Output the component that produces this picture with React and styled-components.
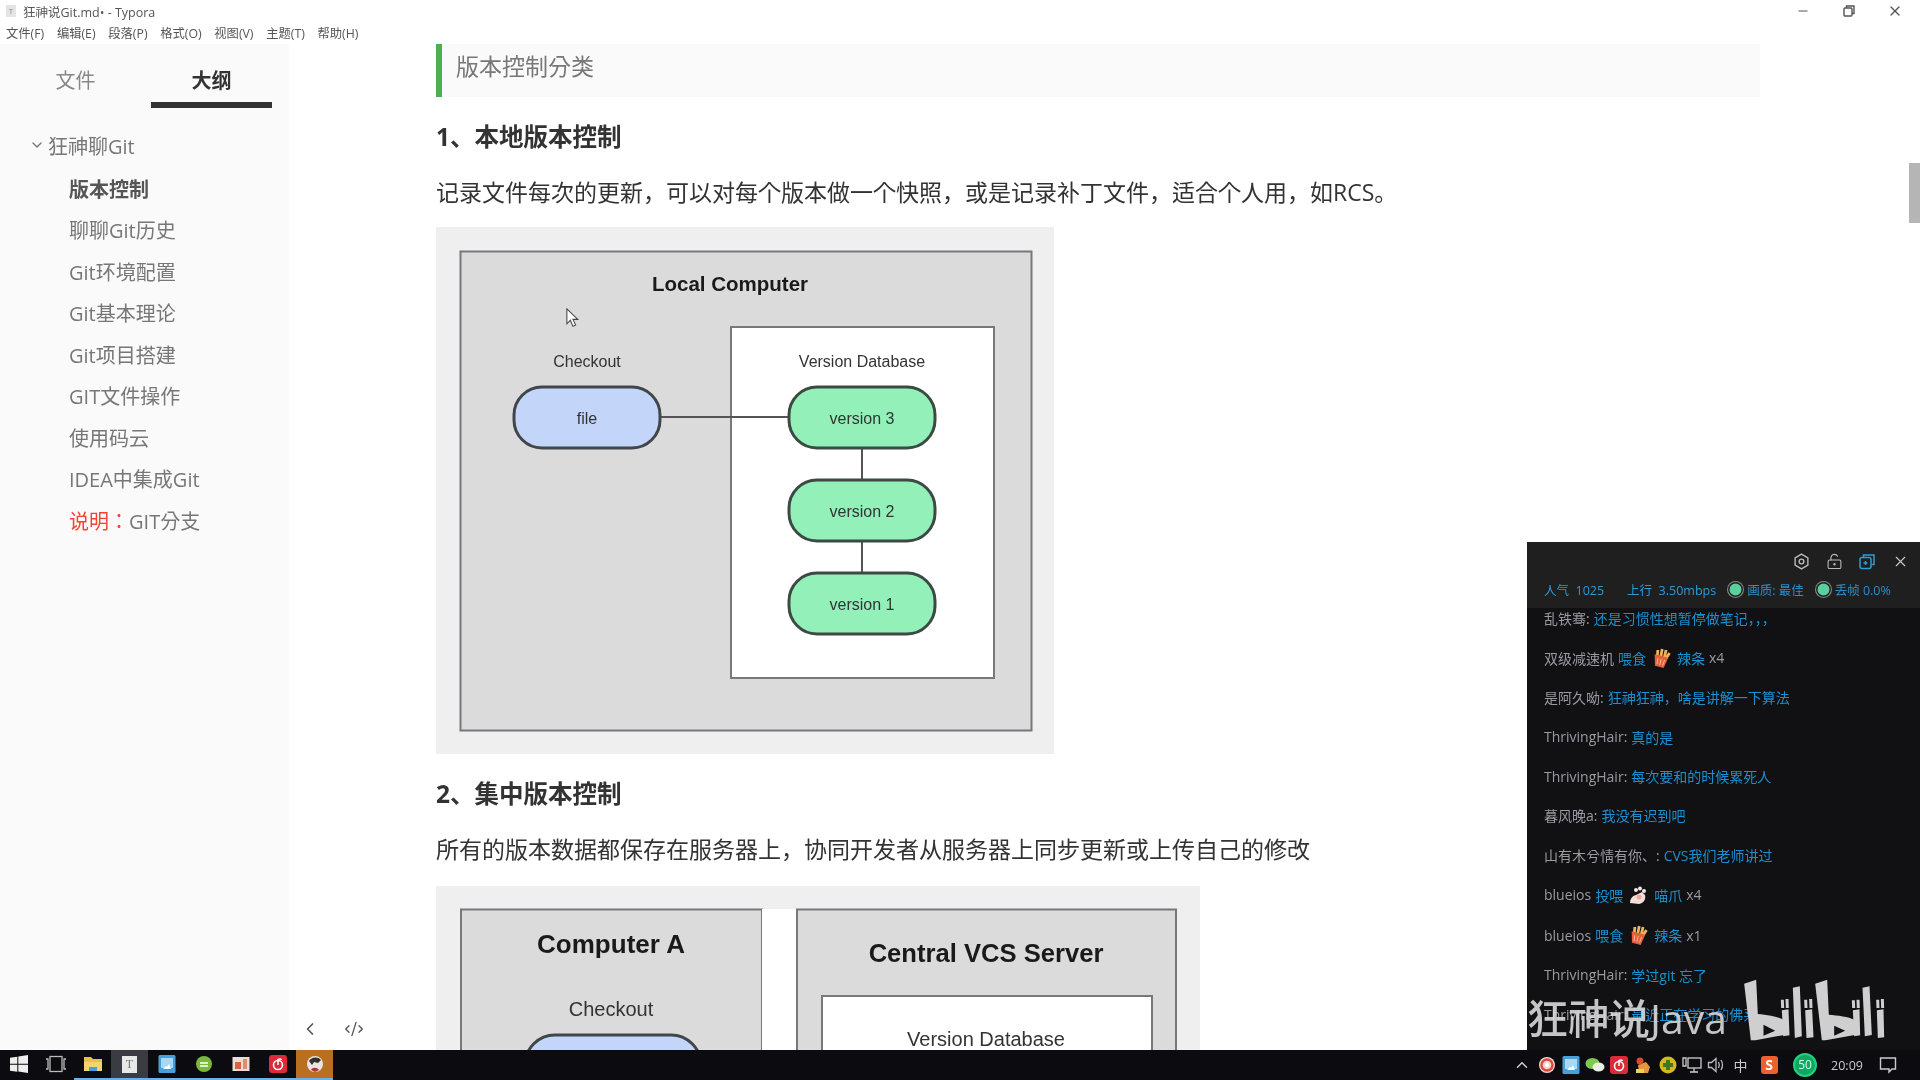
import React from "react";
import styled, { createGlobalStyle } from "styled-components";
import { ChevronDown, ChevronLeft, CodeXml, LockKeyholeOpen, X, Minus, ChevronUp } from "lucide-react";

const GlobalStyle = createGlobalStyle`
  html, body {
    margin: 0;
    padding: 0;
    background: #fff;
  }
  * {
    box-sizing: border-box;
  }
`;

const outline = ["聊聊Git历史", "Git环境配置", "Git基本理论", "Git项目搭建", "GIT文件操作", "使用码云", "IDEA中集成Git"];
const menus = ["文件(F)", "编辑(E)", "段落(P)", "格式(O)", "视图(V)", "主题(T)", "帮助(H)"];

const chatRows = [
  { name: "乱铁骞:", msg: "还是习惯性想暂停做笔记，，，" },
  { name: "双级减速机", msg: "喂食", gift: "fries", item: "辣条", count: "x4" },
  { name: "是阿久呦:", msg: "狂神狂神，啥是讲解一下算法" },
  { name: "ThrivingHair:", msg: "真的是" },
  { name: "ThrivingHair:", msg: "每次要和的时候累死人" },
  { name: "暮风晚a:", msg: "我没有迟到吧" },
  { name: "山有木兮情有你、:", msg: "CVS我们老师讲过" },
  { name: "blueios", msg: "投喂", gift: "paw", item: "喵爪", count: "x4" },
  { name: "blueios", msg: "喂食", gift: "fries", item: "辣条", count: "x1" },
  { name: "ThrivingHair:", msg: "学过git  忘了" },
  { name: "ThrivingHair:", msg: "最近正在学习的佛系" },
];

const App = () => {
  return (
    <Screen>
      <GlobalStyle />
      <TitleBar>
        <TitleLeft>
          <AppGlyph>T</AppGlyph>
          <span>狂神说Git.md• - Typora</span>
        </TitleLeft>
        <WindowButtons>
          <WindowButton><Minus size={14} /></WindowButton>
          <WindowButton>
            <svg width="14" height="14" viewBox="0 0 14 14" fill="none" stroke="#555" strokeWidth="1.4">
              <rect x="2" y="4" width="8" height="8" rx="1" />
              <path d="M4.5 4V2h7.5v7.5h-2" />
            </svg>
          </WindowButton>
          <WindowButton><X size={16} /></WindowButton>
        </WindowButtons>
      </TitleBar>
      <MenuBar>
        {menus.map((m) => (
          <span key={m}>{m}</span>
        ))}
      </MenuBar>

      <Main>
        <Sidebar>
          <Tabs>
            <Tab>文件</Tab>
            <Tab active>大纲</Tab>
          </Tabs>
          <OutlineHead>
            <ChevronDown size={16} strokeWidth={2} />
            <span>狂神聊Git</span>
          </OutlineHead>
          <OutlineItem current>版本控制</OutlineItem>
          {outline.map((o) => (
            <OutlineItem key={o}>{o}</OutlineItem>
          ))}
          <OutlineItem>
            <RedText>说明：</RedText>GIT分支
          </OutlineItem>
          <SidebarFoot>
            <ChevronLeft size={20} strokeWidth={2} />
            <CodeXml size={20} strokeWidth={1.6} />
          </SidebarFoot>
        </Sidebar>

        <Content>
          <Quote>版本控制分类</Quote>
          <Heading>1、本地版本控制</Heading>
          <Para>记录文件每次的更新，可以对每个版本做一个快照，或是记录补丁文件，适合个人用，如RCS。</Para>
          <Figure width={618} height={527} top={15}>
            <LocalDiagram />
            <MouseCursor viewBox="0 0 16 24" width="14" height="21">
              <path d="M1 1v17l4-4 3 7 3-1.500-3-6.500h5.500z" fill="#fff" stroke="#444" strokeWidth="1.2" />
            </MouseCursor>
          </Figure>
          <Heading>2、集中版本控制</Heading>
          <Para>所有的版本数据都保存在服务器上，协同开发者从服务器上同步更新或上传自己的修改</Para>
          <Figure width={764} height={440} top={17}>
            <CentralDiagram />
          </Figure>
        </Content>
        <ScrollThumb />
      </Main>

      <Taskbar>
        <TaskButtons>
          <TaskButton><WinLogo /></TaskButton>
          <TaskButton>
            <svg width="22" height="18" viewBox="0 0 22 18" fill="none" stroke="#bbb" strokeWidth="1.3">
              <rect x="5" y="1.500" width="12" height="15" />
              <path d="M1 4h2v10H1M21 4h-2v10h2" />
            </svg>
          </TaskButton>
          <TaskButton open><FolderIcon /></TaskButton>
          <TaskButton open active>
            <TyporaIcon>T</TyporaIcon>
          </TaskButton>
          <TaskButton open><SquareApp color="#4a9fd8" /></TaskButton>
          <TaskButton open><RoundApp color="#7cb83c" /></TaskButton>
          <TaskButton open><SlideIcon /></TaskButton>
          <TaskButton open><NeteaseIcon /></TaskButton>
          <TaskButton open highlight><AvatarIcon /></TaskButton>
        </TaskButtons>
        <Tray>
          <TraySlot><ChevronUp size={18} color="#ccc" /></TraySlot>
          <TraySlot>
            <svg width="18" height="18" viewBox="0 0 18 18">
              <circle cx="9" cy="9" r="8" fill="#f3d8d2" />
              <circle cx="9" cy="9" r="5.500" fill="none" stroke="#e0483c" strokeWidth="2.400" />
              <circle cx="9" cy="9" r="2" fill="#fff" />
            </svg>
          </TraySlot>
          <TraySlot><SquareApp color="#4a9fd8" /></TraySlot>
          <TraySlot>
            <svg width="20" height="18" viewBox="0 0 20 18">
              <ellipse cx="7.500" cy="7.500" rx="7" ry="5.500" fill="#7ec850" />
              <ellipse cx="13.500" cy="11" rx="6" ry="4.500" fill="#e8f0e2" />
            </svg>
          </TraySlot>
          <TraySlot><NeteaseIcon /></TraySlot>
          <TraySlot>
            <svg width="20" height="20" viewBox="0 0 20 20">
              <path d="M5 10l8-3 4 5-2 6H6z" fill="#e8963c" />
              <circle cx="7" cy="6" r="3.500" fill="#d64a32" />
              <path d="M3 14h8v4H3z" fill="#f0d060" />
            </svg>
          </TraySlot>
          <TraySlot>
            <svg width="18" height="18" viewBox="0 0 18 18">
              <circle cx="9" cy="9" r="8.500" fill="#d6b81c" />
              <path d="M7 4h4v3h3v4h-3v3H7v-3H4V7h3z" fill="#3c7a22" />
            </svg>
          </TraySlot>
          <TraySlot>
            <svg width="20" height="18" viewBox="0 0 20 18" fill="none" stroke="#ccc" strokeWidth="1.300">
              <rect x="6" y="2" width="13" height="10" />
              <path d="M12 12v4M8 16h8M1 2h3v8H1z" />
            </svg>
          </TraySlot>
          <TraySlot>
            <svg width="18" height="18" viewBox="0 0 18 18" fill="none" stroke="#bbb" strokeWidth="1.300">
              <path d="M1.500 6.500h3L9 2.500v13l-4.500-4h-3z" />
              <path d="M11.500 6c1 1.800 1 4.200 0 6M14 4c1.800 3 1.800 7 0 10" />
            </svg>
          </TraySlot>
          <TrayText>中</TrayText>
          <TraySlot wide={32}>
            <SogouBadge>S</SogouBadge>
          </TraySlot>
          <TraySlot wide={40}>
            <SpeedBadge>50</SpeedBadge>
          </TraySlot>
          <Clock>20:09</Clock>
          <TraySlot wide={38}>
            <svg width="18" height="18" viewBox="0 0 18 18" fill="none" stroke="#ccc" strokeWidth="1.400">
              <path d="M1.500 2h15v11h-3.500l-3 3v-3h-8.500z" />
            </svg>
          </TraySlot>
        </Tray>
      </Taskbar>

      <ChatWindow>
        <ChatHeader>
          <ChatTools>
            <svg width="17" height="17" viewBox="0 0 16 16" fill="none" stroke="#bbb" strokeWidth="1.300">
              <path d="M8 1l6 3.500v7L8 15l-6-3.500v-7z" />
              <circle cx="8" cy="8" r="2.200" />
            </svg>
            <LockKeyholeOpen size={17} color="#bbb" strokeWidth={1.500} />
            <svg width="17" height="17" viewBox="0 0 17 16" fill="none" stroke="#2d9ad8" strokeWidth="1.500">
              <rect x="1" y="4" width="11" height="11" rx="2" />
              <path d="M4.500 4V1.500H15V11h-2.500M6.500 7.500v4M4.500 9.500h4" />
            </svg>
            <X size={17} color="#ccc" strokeWidth={1.600} />
          </ChatTools>
          <ChatStats>
            <span>人气&nbsp;&nbsp;1025</span>
            <UploadStat>上行&nbsp;&nbsp;3.50mbps</UploadStat>
            <StatusDot />
            <StatusLabel>画质: 最佳</StatusLabel>
            <StatusDot />
            <StatusLabel>丢帧 0.0%</StatusLabel>
          </ChatStats>
        </ChatHeader>
        <ChatBody>
          <ChatList>
            {chatRows.map((r, i) => (
              <ChatRow key={i} tall={!!r.gift}>
                <ChatName>{r.name}</ChatName>
                <ChatMsg>{r.msg}</ChatMsg>
                {r.gift === "fries" && <FriesIcon />}
                {r.gift === "paw" && <PawIcon />}
                {r.item && <ChatMsg>{r.item}</ChatMsg>}
                {r.count && <ChatName>{r.count}</ChatName>}
              </ChatRow>
            ))}
          </ChatList>
        </ChatBody>
      </ChatWindow>

      <Watermark>
        <WatermarkText>狂神说Java</WatermarkText>
        <BiliLogo />
      </Watermark>
    </Screen>
  );
};

export default App;

const LocalDiagram = () => (
  <svg width="618" height="527" viewBox="0 0 618 527">
    <rect x="24.500" y="24.500" width="571" height="479" fill="#dcdbdc" stroke="#77787a" strokeWidth="2" />
    <DiagramTitle x="294" y="64" fontSize="20.500">Local Computer</DiagramTitle>
    <rect x="295" y="100" width="263" height="351" fill="#fff" stroke="#77787a" strokeWidth="2" />
    <DiagramLabel x="151" y="140" fontSize="16">Checkout</DiagramLabel>
    <DiagramLabel x="426" y="140" fontSize="16">Version Database</DiagramLabel>
    <path d="M224 190h129M426 221v32M426 314v32" stroke="#555" strokeWidth="2" fill="none" />
    <rect x="78" y="160" width="146" height="61" rx="28" fill="#c3d6fa" stroke="#41464a" strokeWidth="3" />
    <DiagramLabel x="151" y="197" fontSize="16" fill="#334a70">file</DiagramLabel>
    {[160, 253, 346].map((y, i) => (
      <g key={y}>
        <rect x="353" y={y} width="146" height="61" rx="28" fill="#92f0b8" stroke="#3c4a44" strokeWidth="3" />
        <DiagramLabel x="426" y={y + 37} fontSize="16" fill="#1f4a30">
          version {3 - i}
        </DiagramLabel>
      </g>
    ))}
  </svg>
);

const CentralDiagram = () => (
  <svg width="764" height="440" viewBox="0 0 764 440">
    <rect x="25" y="23.500" width="301" height="400" fill="#dcdbdc" stroke="#77787a" strokeWidth="2" />
    <rect x="326" y="23" width="35" height="400" fill="#fff" />
    <rect x="361" y="23.500" width="379" height="400" fill="#dcdbdc" stroke="#77787a" strokeWidth="2" />
    <rect x="386" y="110" width="330" height="300" fill="#fff" stroke="#77787a" strokeWidth="2" />
    <DiagramTitle x="175" y="67" fontSize="26">Computer A</DiagramTitle>
    <DiagramTitle x="550" y="76" fontSize="25.600">Central VCS Server</DiagramTitle>
    <DiagramLabel x="175" y="130" fontSize="20">Checkout</DiagramLabel>
    <DiagramLabel x="550" y="160" fontSize="20">Version Database</DiagramLabel>
    <rect x="89" y="149" width="176" height="80" rx="30" fill="#c3d6fa" stroke="#41464a" strokeWidth="3" />
  </svg>
);

const WinLogo = () => (
  <svg width="18" height="18" viewBox="0 0 18 18" fill="#eee">
    <path d="M0 2.700l7.300-1v7H0zM8.300 1.500L18 0v8.700H8.300zM0 9.700h7.300v7l-7.300-1zM8.300 9.700H18V18l-9.700-1.400z" />
  </svg>
);

const FolderIcon = () => (
  <svg width="20" height="18" viewBox="0 0 20 18">
    <path d="M1 2h7l2 2h9v4H1z" fill="#e8c050" />
    <path d="M1 7h18v9H1z" fill="#f4d470" />
    <path d="M6 12h8v4H6z" fill="#4a9fd8" />
  </svg>
);

const SquareApp = ({ color }) => (
  <svg width="18" height="20" viewBox="0 0 18 20">
    <rect x="0.500" y="1" width="17" height="18" rx="1.500" fill={color} />
    <rect x="3" y="4" width="12" height="10" fill="#a8d8f4" />
    <path d="M5 15h8l-2-5-2 3-1-1z" fill="#fff" />
  </svg>
);

const RoundApp = ({ color }) => (
  <svg width="18" height="18" viewBox="0 0 18 18">
    <circle cx="9" cy="9" r="8" fill={color} />
    <path d="M5 8h8M5 11h8" stroke="#fff" strokeWidth="1.500" />
  </svg>
);

const SlideIcon = () => (
  <svg width="18" height="16" viewBox="0 0 18 16">
    <rect x="0.500" y="1" width="17" height="14" fill="#eadfd8" />
    <rect x="3" y="6" width="6" height="7" fill="#d8643c" />
    <rect x="11" y="3" width="4" height="10" fill="#d89070" />
  </svg>
);

const NeteaseIcon = () => (
  <svg width="18" height="18" viewBox="0 0 18 18">
    <rect width="18" height="18" rx="3" fill="#dc2a38" />
    <circle cx="9" cy="10" r="4.500" fill="none" stroke="#fff" strokeWidth="1.600" />
    <path d="M9 10V4.500c1.500-1 3-.5 3.500.5" fill="none" stroke="#fff" strokeWidth="1.500" />
  </svg>
);

const AvatarIcon = () => (
  <svg width="18" height="18" viewBox="0 0 18 18">
    <circle cx="9" cy="9" r="8" fill="#e8e4e0" />
    <path d="M3 6c2-4 9-5 12-1l-3 3-4-1-2 3z" fill="#34302c" />
    <path d="M5 15c1-3 6-3 8 0l-4 2z" fill="#a83c30" />
  </svg>
);

const FriesIcon = () => (
  <GiftSvg viewBox="0 0 20 20">
    <g transform="rotate(14 10 10)">
      <path d="M5 3l1 6M9 1l.5 8M13 1v8M17 3l-2 6" stroke="#f0b45a" strokeWidth="2.800" fill="none" />
      <path d="M3 8h14l-2 11H6z" fill="#e4603a" />
      <path d="M7 11l.7 6M10.500 11v6M14 11l-.7 6" stroke="#f4b8a0" strokeWidth="1" />
    </g>
  </GiftSvg>
);

const PawIcon = () => (
  <GiftSvg viewBox="0 0 20 20">
    <path d="M2 18c0-4 2-7 6-8l6-3 3 3c1 4-1 8-6 9z" fill="#f6dfd8" />
    <circle cx="8" cy="5" r="2" fill="#f3e9e4" />
    <circle cx="12" cy="3.500" r="2" fill="#f3e9e4" />
    <circle cx="16" cy="6" r="2" fill="#f3e9e4" />
    <circle cx="11" cy="12" r="2.500" fill="#f0a89c" />
  </GiftSvg>
);

// logo outlines traced from the watermark, units are 3x reference pixels
const BiliLogo = () => (
  <svg width="141" height="62" viewBox="42 28 422 186" fill="#cfcfcf">
    <path
      fillRule="evenodd"
      d="M42 42L78 30l5 103c28 3 62 8 77 17l6 45-90 17H62zM100 165v33l35-15z"
    />
    <path
      fillRule="evenodd"
      d="M255 42l36-12 5 105c26 2 60 6 76 15l6 45-92 17h-11zM312 168v30l33-15z"
    />
    <path d="M152 90h9l1 25h-9zM166 88h9l1 27h-9zM155 122l20-3 3 78-19 3z" />
    <path d="M188 54l21-4 6 150-21 5z" />
    <path d="M222 90h9l1 25h-9zM237 88h9l1 27h-9zM225 122l21-3 4 84-21 2z" />
    <path d="M365 92h9l1 23h-9zM379 90h9l1 25h-9zM368 122l20-3 2 78-18 3z" />
    <path d="M397 54l21-4 7 146-21 4z" />
    <path d="M438 90h9l1 25h-9zM452 88h9l1 27h-9zM440 122l20-3 2 84-19 2z" />
  </svg>
);

const Screen = styled.div`
  position: relative;
  width: 1920px;
  height: 1080px;
  overflow: hidden;
  display: flex;
  flex-direction: column;
  background: #fff;
  font-family: "Open Sans", "Noto Sans CJK KR", sans-serif;
  color: #333;
  filter: blur(0.55px);
`;

const TitleBar = styled.div`
  height: 22px;
  flex: none;
  display: flex;
  justify-content: space-between;
  align-items: center;
  padding: 0 0 0 6px;
  font-size: 12.5px;
  color: #555;
`;

const TitleLeft = styled.div`
  display: flex;
  align-items: center;
  gap: 7px;
`;

const AppGlyph = styled.div`
  width: 10px;
  height: 12px;
  background: #e4e4e4;
  color: #888;
  font-size: 8px;
  line-height: 12px;
  text-align: center;
`;

const WindowButtons = styled.div`
  display: flex;
  padding-right: 2px;
`;

const WindowButton = styled.div`
  width: 46px;
  height: 20px;
  display: flex;
  align-items: center;
  justify-content: center;
  color: #555;
`;

const MenuBar = styled.div`
  height: 22px;
  flex: none;
  display: flex;
  align-items: center;
  gap: 12.700px;
  padding-left: 6px;
  font-size: 12.300px;
  color: #555;
`;

const Main = styled.div`
  position: relative;
  flex: 1;
  min-height: 0;
  display: flex;
  overflow: hidden;
`;

const Sidebar = styled.div`
  width: 289px;
  flex: none;
  display: flex;
  flex-direction: column;
  background: #fafafa;
  font-size: 20px;
  color: #777;
`;

const Tabs = styled.div`
  display: flex;
  gap: 15px;
  padding: 16px 0 0 15px;
  height: 84px;
`;

const Tab = styled.div`
  width: 121px;
  height: 48px;
  line-height: 42px;
  text-align: center;
  font-weight: ${(p) => (p.active ? 700 : 400)};
  color: ${(p) => (p.active ? "#333" : "#888")};
  border-bottom: 6px solid ${(p) => (p.active ? "#333" : "transparent")};
`;

const OutlineHead = styled.div`
  display: flex;
  align-items: center;
  gap: 3px;
  height: 34px;
  padding-left: 29px;
  margin-bottom: 6.500px;
`;

const OutlineItem = styled.div`
  height: 41.500px;
  line-height: 41.500px;
  padding-left: 69px;
  font-weight: ${(p) => (p.current ? 700 : 400)};
  color: ${(p) => (p.current ? "#555" : "#777")};
`;

const RedText = styled.span`
  color: #f44336;
`;

const SidebarFoot = styled.div`
  margin-top: auto;
  display: flex;
  align-items: center;
  gap: 24px;
  padding: 0 0 11px 300px;
  width: 400px;
  color: #555;
  height: 32px;
  position: relative;
  z-index: 1;
`;

const Content = styled.div`
  flex: 1;
  padding-left: 147px;
  padding-right: 160px;
`;

const Quote = styled.div`
  height: 53px;
  line-height: 44px;
  background: #fafafa;
  border-left: 6px solid #4caf50;
  padding-left: 14px;
  font-size: 23px;
  color: #777;
`;

const Heading = styled.h3`
  margin: 23px 0 0;
  height: 34px;
  line-height: 34px;
  font-size: 24.500px;
  font-weight: 700;
  color: #333;
`;

const Para = styled.p`
  margin: 18px 0 0;
  height: 40px;
  line-height: 40px;
  font-size: 23px;
  color: #333;
  white-space: nowrap;
`;

const Figure = styled.div`
  position: relative;
  margin-top: ${(p) => p.top}px;
  width: ${(p) => p.width}px;
  height: ${(p) => p.height}px;
  flex: none;
  background: #f0eff0;
  svg {
    display: block;
  }
`;

const MouseCursor = styled.svg`
  position: absolute;
  left: 130px;
  top: 81px;
`;

const DiagramTitle = styled.text`
  font-family: "Liberation Sans", Arial, sans-serif;
  font-weight: 700;
  text-anchor: middle;
  fill: #1a1a1a;
`;

const DiagramLabel = styled.text`
  font-family: "Liberation Sans", Arial, sans-serif;
  text-anchor: middle;
  fill: #333;
`;

const ScrollThumb = styled.div`
  position: absolute;
  right: 0;
  top: 119px;
  width: 11px;
  height: 60px;
  background: #b5b5b5;
`;

const Taskbar = styled.div`
  height: 30px;
  flex: none;
  display: flex;
  justify-content: space-between;
  background: #0c0c10;
`;

const TaskButtons = styled.div`
  display: flex;
`;

const TaskButton = styled.div`
  width: 37px;
  height: 30px;
  display: flex;
  align-items: center;
  justify-content: center;
  background: ${(p) => (p.highlight ? "#b87020" : p.active ? "#3a3c42" : "transparent")};
  border-bottom: 2px solid ${(p) => (p.open ? "#6cb0e8" : "transparent")};
`;

const TyporaIcon = styled.div`
  width: 15px;
  height: 17px;
  background: #e8e8e8;
  color: #777;
  font-size: 12px;
  line-height: 17px;
  text-align: center;
  font-family: "Liberation Serif", serif;
`;

const Tray = styled.div`
  display: flex;
  align-items: center;
  padding-right: 13px;
`;

const TraySlot = styled.div`
  width: ${(p) => p.wide || 24.200}px;
  height: 30px;
  display: flex;
  align-items: center;
  justify-content: center;
`;

const TrayText = styled.div`
  width: 25px;
  text-align: center;
  font-size: 14px;
  color: #ccc;
`;

const SogouBadge = styled.div`
  width: 17px;
  height: 18px;
  background: #f0602c;
  border-radius: 3px;
  color: #fff;
  font-weight: 700;
  font-size: 14px;
  line-height: 18px;
  text-align: center;
`;

const SpeedBadge = styled.div`
  width: 24px;
  height: 24px;
  border-radius: 50%;
  background: #10a860;
  border: 2px solid #22d080;
  color: #cfe;
  font-size: 12px;
  line-height: 20px;
  text-align: center;
`;

const Clock = styled.div`
  width: 44px;
  text-align: center;
  font-size: 12.500px;
  color: #ccc;
`;

const ChatWindow = styled.div`
  position: absolute;
  left: 1527px;
  top: 542px;
  width: 393px;
  height: 508px;
  display: flex;
  flex-direction: column;
  background: #111114;
`;

const ChatHeader = styled.div`
  height: 66px;
  flex: none;
  background: #1f1f20;
  padding: 10px 0 0 17px;
`;

const ChatTools = styled.div`
  display: flex;
  justify-content: flex-end;
  align-items: center;
  gap: 16px;
  height: 18px;
  padding-right: 11px;
`;

const ChatStats = styled.div`
  display: flex;
  align-items: center;
  margin-top: 10px;
  height: 18px;
  font-size: 12.500px;
  color: #2d9ad8;
`;

const UploadStat = styled.span`
  margin-left: 23px;
`;

const StatusDot = styled.span`
  width: 15px;
  height: 15px;
  margin: 0 4px 0 12px;
  border-radius: 50%;
  background: #5ccf9f;
  box-shadow: inset 0 0 0 1.500px #1f1f20, 0 0 0 1px #888;
`;

const StatusLabel = styled.span`
  color: #2d8dc8;
`;

const ChatBody = styled.div`
  flex: 1;
  min-height: 0;
  overflow: hidden;
`;

const ChatList = styled.div`
  margin-top: -10px;
  padding-left: 17px;
`;

const ChatRow = styled.div`
  height: ${(p) => (p.tall ? 40.5 : 39.3)}px;
  display: flex;
  align-items: center;
  gap: 4px;
  font-size: 14px;
  white-space: nowrap;
`;

const ChatName = styled.span`
  color: #9a9aa2;
`;

const ChatMsg = styled.span`
  color: #1b8fd0;
`;

const GiftSvg = styled.svg`
  width: 20px;
  height: 20px;
  margin: 0 2px 0 1px;
`;

const Watermark = styled.div`
  position: absolute;
  left: 1527px;
  top: 979px;
  display: flex;
  align-items: flex-start;
`;

const WatermarkText = styled.div`
  width: 217px;
  margin-top: 15px;
  line-height: 48px;
  font-size: 41px;
  font-weight: 500;
  color: rgba(222, 222, 222, 0.88);
  white-space: nowrap;
`;
